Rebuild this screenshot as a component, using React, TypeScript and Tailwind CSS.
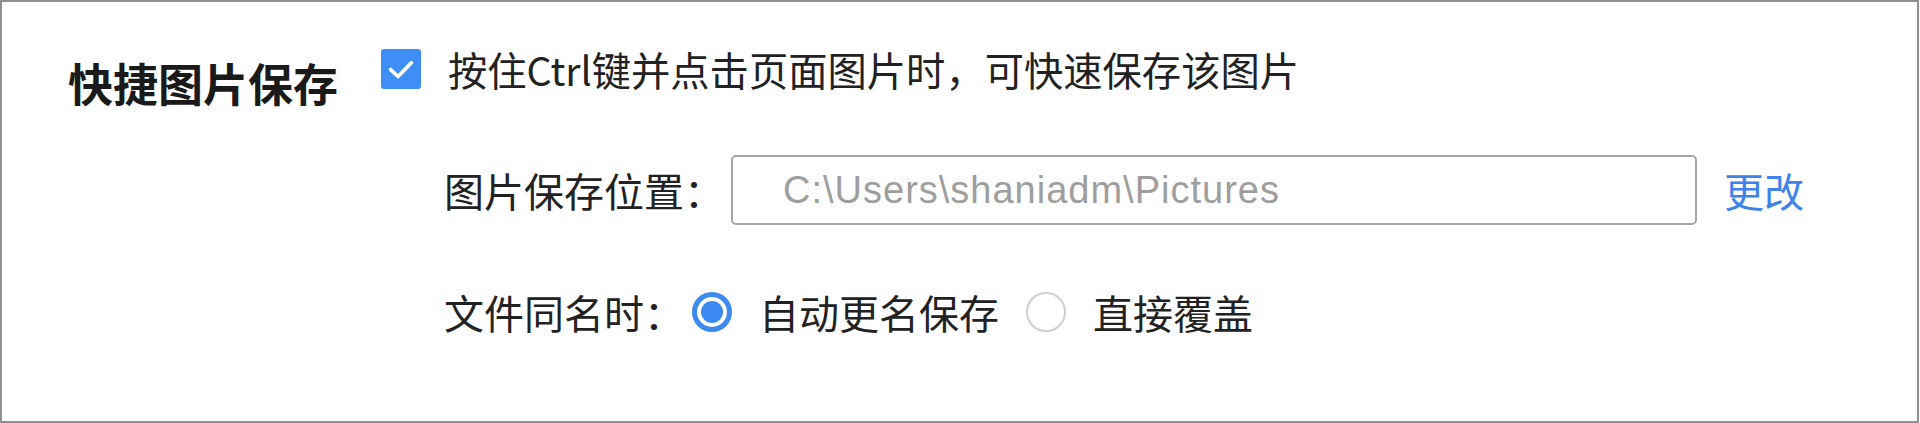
import React from "react";

const cjk = { fontFamily: '"Noto Sans CJK SC", "Noto Sans", sans-serif' };

export default function App() {
  return (
    <div
      className="w-[1919px] h-[423px] border-2 border-[#8f8f8f] bg-white flex"
      style={cjk}
    >
      <div className="w-[379px] shrink-0 pl-[66px] pt-[58px]">
        <div className="text-[45px] leading-[45px] font-bold text-[#1a1a1a] whitespace-nowrap">
          快捷图片保存
        </div>
      </div>
      <div className="flex flex-col pt-[47px]">
        <div className="flex items-center h-[40px]">
          <div className="w-[40px] h-[40px] rounded-[3px] bg-[#3f8ef5] flex items-center justify-center">
            <svg width="30" height="30" viewBox="0 0 26 26" fill="none">
              <path
                d="M4 13.5 L10.5 19.5 L22 7.5"
                stroke="white"
                strokeWidth="3.2"
                strokeLinecap="round"
                strokeLinejoin="round"
              />
            </svg>
          </div>
          <span className="ml-[27px] text-[39.3px] leading-[40px] text-[#222222] whitespace-nowrap">
            按住Ctrl键并点击页面图片时，可快速保存该图片
          </span>
        </div>

        <div className="flex items-center mt-[66px] pl-[63px]">
          <span className="w-[287px] shrink-0 text-[40px] leading-[40px] text-[#222222] whitespace-nowrap">
            图片保存位置：
          </span>
          <div className="w-[966px] h-[70px] border-2 border-[#a6a6a6] rounded-[5px] flex items-center pl-[50px]">
            <span
              className="text-[38px] leading-[40px] tracking-[1px] text-[#9e9e9e] whitespace-nowrap"
              style={{ fontFamily: '"Liberation Sans", Arial, sans-serif' }}
            >
              C:\Users\shaniadm\Pictures
            </span>
          </div>
          <span className="ml-[27px] text-[40px] leading-[40px] text-[#3d83ea] whitespace-nowrap">
            更改
          </span>
        </div>

        <div className="flex items-center mt-[67px] pl-[63px] h-[40px]">
          <span className="w-[248px] shrink-0 text-[40px] leading-[40px] text-[#222222] whitespace-nowrap">
            文件同名时：
          </span>
          <div className="w-[40px] h-[40px] rounded-full bg-[#3d89f2] flex items-center justify-center">
            <div className="w-[30px] h-[30px] rounded-full bg-white flex items-center justify-center">
              <div className="w-[22px] h-[22px] rounded-full bg-[#3d89f2]" />
            </div>
          </div>
          <span className="ml-[27px] w-[240px] text-[40px] leading-[40px] text-[#222222] whitespace-nowrap">
            自动更名保存
          </span>
          <div className="ml-[27px] w-[40px] h-[40px] rounded-full border-2 border-[#cfcfcf] bg-white" />
          <span className="ml-[27px] text-[40px] leading-[40px] text-[#222222] whitespace-nowrap">
            直接覆盖
          </span>
        </div>
      </div>
    </div>
  );
}
